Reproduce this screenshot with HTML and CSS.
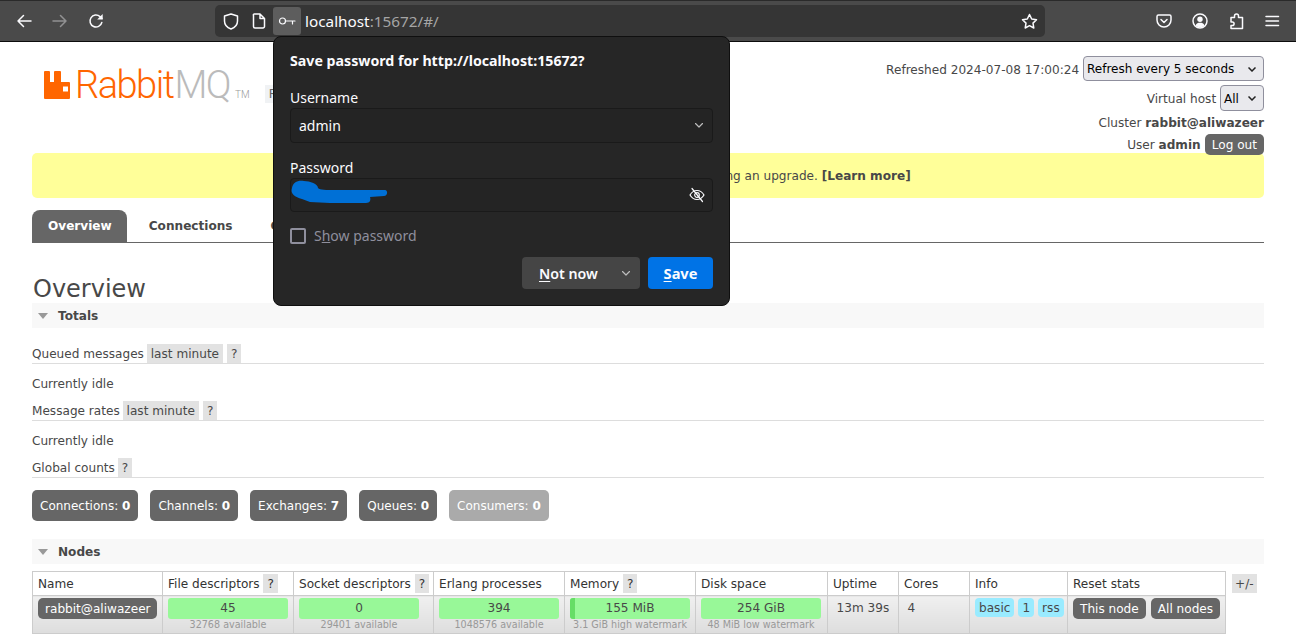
FILE: index.html
```html
<!DOCTYPE html>
<html lang="en">
<head>
<meta charset="utf-8">
<title>RabbitMQ Management</title>
<link rel="stylesheet" href="styles.css">
</head>
<body>
<div class="toolbar">
  <div class="nav-group">
    <button class="tool"><svg width="16" height="16" viewBox="0 0 16 16" class="ico"><path d="M15 8H2M7.500 2.500 2 8l5.500 5.500"/></svg></button>
    <button class="tool dim"><svg width="16" height="16" viewBox="0 0 16 16" class="ico"><path d="M1 8h13M8.500 2.500 14 8l-5.500 5.500"/></svg></button>
    <button class="tool"><svg width="16" height="16" viewBox="0 0 16 16" class="ico"><path d="M13.800 9.500A6 6 0 1 1 12 3.600L14 5.500"/><path class="fill" d="M14.700 1v5.500H9.200z"/></svg></button>
  </div>
  <div class="urlbar">
    <span class="url-icon"><svg width="16" height="17" viewBox="0 0 16 17" class="ico"><path d="M8 1 1.500 3v5c0 4 3 6.800 6.500 8 3.500-1.200 6.500-4 6.500-8V3z"/></svg></span>
    <span class="url-icon"><svg width="14" height="16" viewBox="0 0 14 16" class="ico"><path d="M2.500 1h5.500L12.500 5.500V13.500a1.500 1.500 0 0 1-1.500 1.500H3a1.500 1.500 0 0 1-1.500-1.500V2.500A1 1 0 0 1 2.500 1zM8 1v4.500h4.500"/></svg></span>
    <span class="key-btn"><svg width="18" height="10" viewBox="0 0 18 10" class="ico thin"><circle cx="4.500" cy="5" r="3"/><path d="M7.500 5H17M14.500 5v3"/></svg></span>
    <span class="url-text">localhost<span class="url-dim">:15672/#/</span></span>
    <span class="url-star"><svg width="17" height="17" viewBox="0 0 17 17" class="ico"><path d="M8.500 1.500 10.700 6l4.800.7-3.500 3.400.8 4.900-4.300-2.300L4.200 15l.8-4.900L1.500 6.700 6.300 6z"/></svg></span>
  </div>
  <div class="right-tools">
    <button class="tool"><svg width="16" height="16" viewBox="0 0 16 16" class="ico"><path d="M2.500 2h11A1.500 1.500 0 0 1 15 3.500V7a7 7 0 0 1-14 0V3.500A1.500 1.500 0 0 1 2.500 2zM5 6.500l3 3 3-3"/></svg></button>
    <button class="tool"><svg width="16" height="16" viewBox="0 0 16 16" class="ico"><circle cx="8" cy="8" r="7"/><circle class="fill" cx="8" cy="6.300" r="2.700"/><path class="fill" d="M3.500 12.500C4.500 10 6 9.800 8 9.800s3.500.2 4.500 2.700C11 14 9.500 14.500 8 14.500s-3-.5-4.500-2z"/></svg></button>
    <button class="tool"><svg width="16" height="17" viewBox="0 0 16 17" class="ico"><path d="M6.500 3a2 2 0 0 1 4 0v1.500h4v11H3v-3h1.300a1.800 1.800 0 0 0 0-3.600H3V4.500h3.500z"/></svg></button>
    <button class="tool"><svg width="16" height="16" viewBox="0 0 16 16" class="ico"><path d="M2 3.500h12.500M2 8h12.500M2 12.500h12.500"/></svg></button>
  </div>
</div>

<div class="popup">
  <div class="popup-title">Save password for http://localhost:15672?</div>
  <div class="field-label">Username</div>
  <div class="field">
    <span>admin</span>
    <svg width="8" height="5" viewBox="0 0 8 5" class="chev-light"><path d="M.5.5 4 4 7.500.5"/></svg>
  </div>
  <div class="field-label second">Password</div>
  <div class="field pass">
    <span class="pw-dot">*</span>
    <svg width="16" height="16" viewBox="0 0 16 16" class="eye"><path d="M1 8c1.800-3 4.200-4.500 7-4.500S13.200 5 15 8c-1.800 3-4.200 4.500-7 4.500S2.800 11 1 8z"/><circle cx="8" cy="8" r="2.300"/><path d="M3 1.500 13.500 14.500"/></svg>
    <svg class="scribble" width="100" height="24" viewBox="0 0 100 24"><path d="M2 8C3 2 8 0 14 1c6 0 14 3 14 7 2 2 8 2 17 2h50c3 0 3 6-1 6l-14 1c1 3 0 6-4 6H40l-20-1-8-3C5 17 0 14 2 8z"/></svg>
  </div>
  <div class="check-row"><span class="checkbox"></span><span>S<u>h</u>ow password</span></div>
  <div class="popup-actions">
    <div class="btn-split"><span><u>N</u>ot now</span><svg width="8" height="5" viewBox="0 0 8 5" class="chev-light"><path d="M.5.5 4 4 7.500.5"/></svg></div>
    <div class="btn-save"><u>S</u>ave</div>
  </div>
</div>

<div class="page">
  <header class="head">
    <div class="brand">
      <svg class="rabbit" width="27" height="28" viewBox="0 0 27 28"><path fill-rule="evenodd" d="M1 0h4a1 1 0 0 1 1 1v10h4V1a1 1 0 0 1 1-1h5a1 1 0 0 1 1 1v10h8a1 1 0 0 1 1 1v15a1 1 0 0 1-1 1H1a1 1 0 0 1-1-1V1a1 1 0 0 1 1-1zM19 15.500v5h5v-5z"/></svg>
      <span class="word-a">Rabbit</span><span class="word-b">MQ</span><span class="tm">TM</span>
      <span class="versions">RabbitMQ 3.13.3</span>
    </div>
    <div class="head-right">
      <div class="head-row r1">Refreshed 2024-07-08 17:00:24 <div class="sel wide"><span>Refresh every 5 seconds</span><svg width="8" height="5" viewBox="0 0 8 5" class="chev-dark"><path d="M.5.500 4 4 7.500.5"/></svg></div></div>
      <div class="head-row r2">Virtual host <div class="sel"><span>All</span><svg width="8" height="5" viewBox="0 0 8 5" class="chev-dark"><path d="M.5.500 4 4 7.500.5"/></svg></div></div>
      <div class="head-row r3">Cluster <b>rabbit@aliwazeer</b></div>
      <div class="head-row r4">User <b>admin</b><span class="logout">Log out</span></div>
    </div>
  </header>

  <div class="banner">This RabbitMQ version is not supported. Consider planning an upgrade. <b>[Learn more]</b></div>

  <nav class="tabs">
    <a class="tab active">Overview</a>
    <a class="tab">Connections</a>
    <a class="tab">Channels</a>
  </nav>

  <h1>Overview</h1>

  <div class="section-h"><span class="tri"></span>Totals</div>
  <div class="line-h first">Queued messages <span class="tag">last minute</span> <span class="tag q">?</span></div>
  <p class="idle">Currently idle</p>
  <div class="line-h">Message rates <span class="tag">last minute</span> <span class="tag q">?</span></div>
  <p class="idle">Currently idle</p>
  <div class="line-h">Global counts <span class="tag q">?</span></div>

  <div class="stats">
    <span class="stat">Connections: <b>0</b></span>
    <span class="stat">Channels: <b>0</b></span>
    <span class="stat">Exchanges: <b>7</b></span>
    <span class="stat">Queues: <b>0</b></span>
    <span class="stat off">Consumers: <b>0</b></span>
  </div>

  <div class="section-h nodes"><span class="tri"></span>Nodes</div>

  <div class="table-wrap">
    <table class="nodes-table">
      <thead>
        <tr>
          <th class="c1">Name</th>
          <th class="c2">File descriptors <span class="tag q">?</span></th>
          <th class="c3">Socket descriptors <span class="tag q">?</span></th>
          <th class="c4">Erlang processes</th>
          <th class="c5">Memory <span class="tag q">?</span></th>
          <th class="c6">Disk space</th>
          <th class="c7">Uptime</th>
          <th class="c8">Cores</th>
          <th class="c9">Info</th>
          <th class="c10">Reset stats</th>
        </tr>
      </thead>
      <tbody>
        <tr>
          <td><span class="node-name">rabbit@aliwazeer</span></td>
          <td><div class="bar">45</div><div class="sub">32768 available</div></td>
          <td><div class="bar">0</div><div class="sub">29401 available</div></td>
          <td><div class="bar">394</div><div class="sub">1048576 available</div></td>
          <td><div class="bar mem"><span class="mem-fill"></span>155 MiB</div><div class="sub">3.1 GiB high watermark</div></td>
          <td><div class="bar">254 GiB</div><div class="sub">48 MiB low watermark</div></td>
          <td class="plain">13m 39s</td>
          <td class="plain">4</td>
          <td class="info"><span class="pill">basic</span><span class="pill">1</span><span class="pill">rss</span></td>
          <td class="reset"><span class="node-name">This node</span><span class="node-name">All nodes</span></td>
        </tr>
      </tbody>
    </table>
    <span class="tag plusminus">+/-</span>
  </div>
</div>
</body>
</html>
```

FILE: styles.css
```css
* { box-sizing: border-box; }
html, body { margin: 0; padding: 0; height: 636px; overflow: hidden; background: #fff; }
body { font-family: "DejaVu Sans", Verdana, sans-serif; font-size: 12.1px; color: #484848; position: relative; }

/* browser chrome */
.toolbar { height: 42px; background: #4a4a4a; border-top: 1px solid #2a2a2a; border-bottom: 1px solid #0c0c0c; display: flex; align-items: center; font-family: "Noto Sans", sans-serif; }
.nav-group { display: flex; width: 114px; padding-left: 6px; margin-right: 101px; flex: none; }
.tool { width: 36px; height: 32px; background: none; border: 0; padding: 0; display: flex; align-items: center; justify-content: center; color: #fbfbfe; }
.tool.dim { opacity: .4; }
.ico { fill: none; stroke: #fbfbfe; stroke-width: 1.500; stroke-linecap: round; stroke-linejoin: round; }
.ico.thin { stroke-width: 1.200; }
.ico .fill { fill: #fbfbfe; stroke: none; }
.urlbar { width: 830px; height: 32px; flex: none; background: #353535; border-radius: 5px; display: flex; align-items: center; color: #fbfbfe; }
.url-icon { width: 28px; display: flex; justify-content: center; flex: none; }
.url-icon:first-child { margin-left: 2px; }
.key-btn { width: 28px; height: 28px; background: #5d5d5d; border-radius: 3px; display: flex; align-items: center; justify-content: center; flex: none; }
.url-text { margin-left: 4px; font-size: 15.300px; flex: 1; }
.url-dim { color: #a5a5a5; }
.url-star { width: 32px; display: flex; justify-content: center; }
.right-tools { display: flex; margin-left: auto; margin-right: 6px; }

/* password popup */
.popup { position: absolute; left: 273px; top: 36px; width: 457px; height: 270px; z-index: 5; background: #262626; border: 1px solid #0f0f0f; border-radius: 8px; padding: 14px 16px 0; color: #fbfbfe; font-family: "Noto Sans", sans-serif; font-size: 14px; }
.popup-title { font-weight: 700; font-size: 14.200px; line-height: 20px; }
.field-label { margin-top: 17px; line-height: 20px; }
.field-label.second { margin-top: 15px; }
.field { height: 35px; background: #242424; border: 1px solid #1a1a1a; border-radius: 4px; padding: 0 9px 0 8px; display: flex; align-items: center; justify-content: space-between; position: relative; }
.field.pass { height: 34px; padding-right: 7px; }
.pw-dot { color: #fbfbfe; }
.chev-light { fill: none; stroke: #bdbdbd; stroke-width: 1.200; stroke-linecap: round; stroke-linejoin: round; }
.eye { fill: none; stroke: #fbfbfe; stroke-width: 1.200; stroke-linecap: round; }
.scribble { position: absolute; left: -1px; top: 1px; fill: #0070d6; }
.check-row { margin-top: 16px; display: flex; align-items: center; gap: 8px; color: #8f8f9d; line-height: 16px; }
.checkbox { width: 16px; height: 16px; border: 2px solid #8f8f9d; border-radius: 2px; }
.popup-actions { margin-top: 13px; display: flex; justify-content: flex-end; gap: 8px; font-weight: 600; font-size: 14.200px; }
.btn-split { width: 118px; height: 32px; background: #454545; border-radius: 4px; display: flex; align-items: center; justify-content: space-between; padding: 0 10px 0 17px; }
.btn-save { width: 65px; height: 32px; background: #0073e6; border-radius: 4px; display: flex; align-items: center; justify-content: center; font-size: 14.600px; font-weight: 700; }
.btn-save u, .btn-split u { text-underline-offset: 2px; }

/* page */
.page { padding: 0 32px; }
.head { height: 111px; display: flex; justify-content: space-between; position: relative; z-index: 1; }
.brand { display: flex; align-items: flex-start; padding: 29px 0 0 12px; font-family: "Roboto", sans-serif; font-weight: 300; font-size: 38px; line-height: 28px; letter-spacing: -1.500px; }
.rabbit { fill: #ff6600; flex: none; margin-right: 4px; }
.word-a { color: #ff6600; }
.word-b { color: #bbb; margin-left: 1px; }
.tm { font-size: 10px; letter-spacing: 0; color: #999; margin: 19px 0 0 5px; line-height: 10px; }
.versions { font: 12.100px "DejaVu Sans", sans-serif; letter-spacing: 0; background: #f0f2f4; color: #666; padding: 2px 4px; margin: 14px 0 0 15px; line-height: 14px; white-space: nowrap; }
.head-right { display: flex; flex-direction: column; align-items: flex-end; padding-top: 14px; }
.head-row { display: flex; align-items: center; white-space: pre; flex: none; }
.r1 { height: 25px; padding-top: 2px; }
.r2 { height: 26px; padding-top: 2px; margin-top: 4px; }
.r3 { height: 18px; margin-top: 3px; }
.r4 { height: 21px; margin-top: 2px; }
.head-row b { color: #484848; }
.sel { height: 26px; margin-top: -2px; align-self: flex-start; background: #e9e9ed; border: 1px solid #8f8f9d; border-radius: 4px; padding: 1px 7px 0 3px; display: flex; align-items: center; justify-content: space-between; color: #000; width: 44px; font-size: 12px; }
.sel.wide { width: 181px; height: 25px; }
.chev-dark { fill: none; stroke: #222; stroke-width: 1.500; flex: none; }
.logout { background: #666; color: #fff; border-radius: 5px; height: 21px; padding: 0 7px; margin-left: 4px; display: flex; align-items: center; }
.banner { height: 45px; background: #ffff99; border-radius: 5px; display: flex; align-items: center; justify-content: center; white-space: pre; }
.banner b { font-weight: 700; }
.tabs { margin-top: 12px; height: 33px; border-bottom: 1px solid #666; display: flex; font-weight: 700; }
.tab { height: 32px; padding: 0 16px; display: flex; align-items: center; border-radius: 8px 8px 0 0; color: #484848; margin-right: 6px; }
.tab.active { background: #666; color: #fff; padding-right: 15px; }
h1 { margin: 32px 0 0 1px; font-size: 24px; font-weight: 400; line-height: 28px; color: #484848; }
.section-h { height: 25px; background: #f8f8f8; display: flex; align-items: center; font-weight: 700; padding-left: 6px; }
.section-h.nodes { margin-top: 18px; }
.tri { width: 0; height: 0; border-left: 5px solid transparent; border-right: 5px solid transparent; border-top: 6px solid #999; margin-right: 10px; }
.line-h { height: 20px; border-bottom: 1px solid #ddd; display: flex; align-items: center; white-space: pre; margin-top: 7px; }
.line-h.first { margin-top: 16px; }
.tag { background: #e2e2e2; height: 19px; padding: 0 4px; display: inline-flex; align-items: center; }
.line-h .tag { margin-left: -1px; }
.line-h .tag + .tag { margin-left: 4px; }
.idle { margin: 10px 0 0; height: 20px; line-height: 20px; }
.stats { margin-top: 12px; display: flex; gap: 12px; }
.stat { height: 31px; background: #666; color: #fff; border-radius: 5px; padding: 0 8px; display: flex; align-items: center; white-space: pre; font-size: 12px; }
.stat.off { background: #aaa; }
.table-wrap { margin-top: 7px; display: flex; align-items: flex-start; gap: 6px; }
.nodes-table { width: 1193px; table-layout: fixed; border-collapse: collapse; }
.c1 { width: 130px; } .c2 { width: 131px; } .c3 { width: 140px; } .c4 { width: 131px; } .c5 { width: 131px; } .c6 { width: 132px; } .c7 { width: 71px; } .c8 { width: 71px; } .c9 { width: 98px; } .c10 { width: 158px; }
.nodes-table th, .nodes-table td { border: 1px solid #ccc; font-weight: 400; text-align: left; padding: 0 5px; white-space: nowrap; }
.nodes-table th { height: 24px; color: #333; }
.nodes-table td { height: 38px; vertical-align: top; padding-top: 2px; background: linear-gradient(#f0f0f0, #ddd); }
.node-name { background: #666; color: #fff; border-radius: 5px; height: 21px; padding: 0 6px 0 7px; display: inline-flex; align-items: center; vertical-align: top; }
.bar { width: 120px; height: 21px; background: #98f898; border-radius: 3px; text-align: center; line-height: 21px; position: relative; overflow: hidden; }
.mem-fill { position: absolute; left: 0; top: 0; bottom: 0; width: 5px; background: #66dd66; }
.sub { width: 120px; font-size: 9.600px; color: #999; text-align: center; line-height: 12px; }
.nodes-table td.plain { padding: 4px 0 0 8.500px; line-height: 16px; }
.pill { background: #99ebff; border-radius: 4px; height: 19px; padding: 0 4px; display: inline-flex; align-items: center; margin-right: 4px; vertical-align: top; }
.reset .node-name { margin-right: 5px; padding-right: 7px; }
.plusminus { margin-top: 3px; padding: 0 3px; height: 19px; flex: none; }
```
